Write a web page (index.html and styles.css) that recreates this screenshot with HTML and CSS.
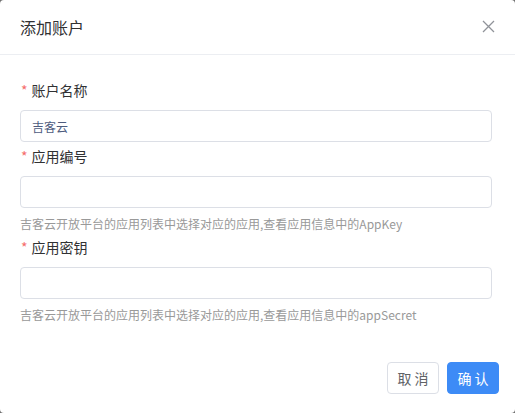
FILE: index.html
```html
<!DOCTYPE html>
<html lang="zh-CN">
<head>
  <meta charset="UTF-8" />
  <meta name="viewport" content="width=device-width, initial-scale=1.0"/>
  <title>添加账户</title>
  <link rel="stylesheet" href="styles.css">
</head>
<body>

  <div class="dialog">
    <div class="dialog-header">
      <span class="dialog-title">添加账户</span>
      <span class="dialog-close">
        <svg width="13" height="13" viewBox="0 0 13 13">
          <path d="M1 1 L12 12 M12 1 L1 12" stroke="#909399" stroke-width="1.3" fill="none"/>
        </svg>
      </span>
    </div>

    <form class="dialog-body">
      <div class="form-item">
        <label class="form-label"><i>*</i>账户名称</label>
        <input type="text" class="form-input" value="吉客云">
      </div>

      <div class="form-item">
        <label class="form-label"><i>*</i>应用编号</label>
        <input type="text" class="form-input">
        <div class="form-hint">吉客云开放平台的应用列表中选择对应的应用,查看应用信息中的AppKey</div>
      </div>

      <div class="form-item">
        <label class="form-label"><i>*</i>应用密钥</label>
        <input type="text" class="form-input">
        <div class="form-hint">吉客云开放平台的应用列表中选择对应的应用,查看应用信息中的appSecret</div>
      </div>
    </form>

    <div class="dialog-footer">
      <button class="btn">取 消</button>
      <button class="btn btn-primary">确 认</button>
    </div>
  </div>

</body>
</html>
```

FILE: styles.css
```css
body {
  margin: 0;
  background-color: #6f6f6f;
  font-family: 'Noto Sans CJK SC', 'Noto Sans', sans-serif;
}

.dialog {
  width: 515px;
  height: 413px;
  background: white;
  border-radius: 4px;
  box-sizing: border-box;
  display: flex;
  flex-direction: column;
}

.dialog-header {
  height: 54px;
  padding: 0 20px;
  display: flex;
  align-items: center;
  justify-content: space-between;
  border-bottom: 1px solid #eceef2;
}

.dialog-title {
  font-size: 16px;
  color: #303133;
  line-height: 24px;
}

.dialog-close {
  display: flex;
  margin-top: -1px;
}

.dialog-body {
  padding: 25px 23px 0 20px;
  flex: 1;
}

.form-item {
  margin-bottom: 4px;
}

.form-label {
  display: block;
  font-size: 14px;
  line-height: 20px;
  color: #303133;
  margin-bottom: 10px;
}

.form-label i {
  font-style: normal;
  color: #f56c6c;
  margin-right: 4px;
  margin-left: 1px;
}

.form-input {
  display: block;
  width: 100%;
  height: 32px;
  box-sizing: border-box;
  padding: 0 11px;
  border: 1px solid #dcdfe6;
  border-radius: 4px;
  font-family: inherit;
  font-size: 12px;
  color: #4e5c7e;
  outline: none;
}

.form-hint {
  font-size: 12px;
  line-height: 18px;
  color: #999999;
  padding-top: 7px;
}

.dialog-footer {
  display: flex;
  justify-content: flex-end;
  gap: 8px;
  padding: 0 16px 19px 0;
}

.btn {
  width: 52px;
  height: 32px;
  padding: 0;
  font-family: inherit;
  font-size: 14px;
  color: #606266;
  background: white;
  border: 1px solid #dcdfe6;
  border-radius: 4px;
  cursor: pointer;
}

.btn-primary {
  color: white;
  background-color: #3d8bf6;
  border-color: #3d8bf6;
}
```
